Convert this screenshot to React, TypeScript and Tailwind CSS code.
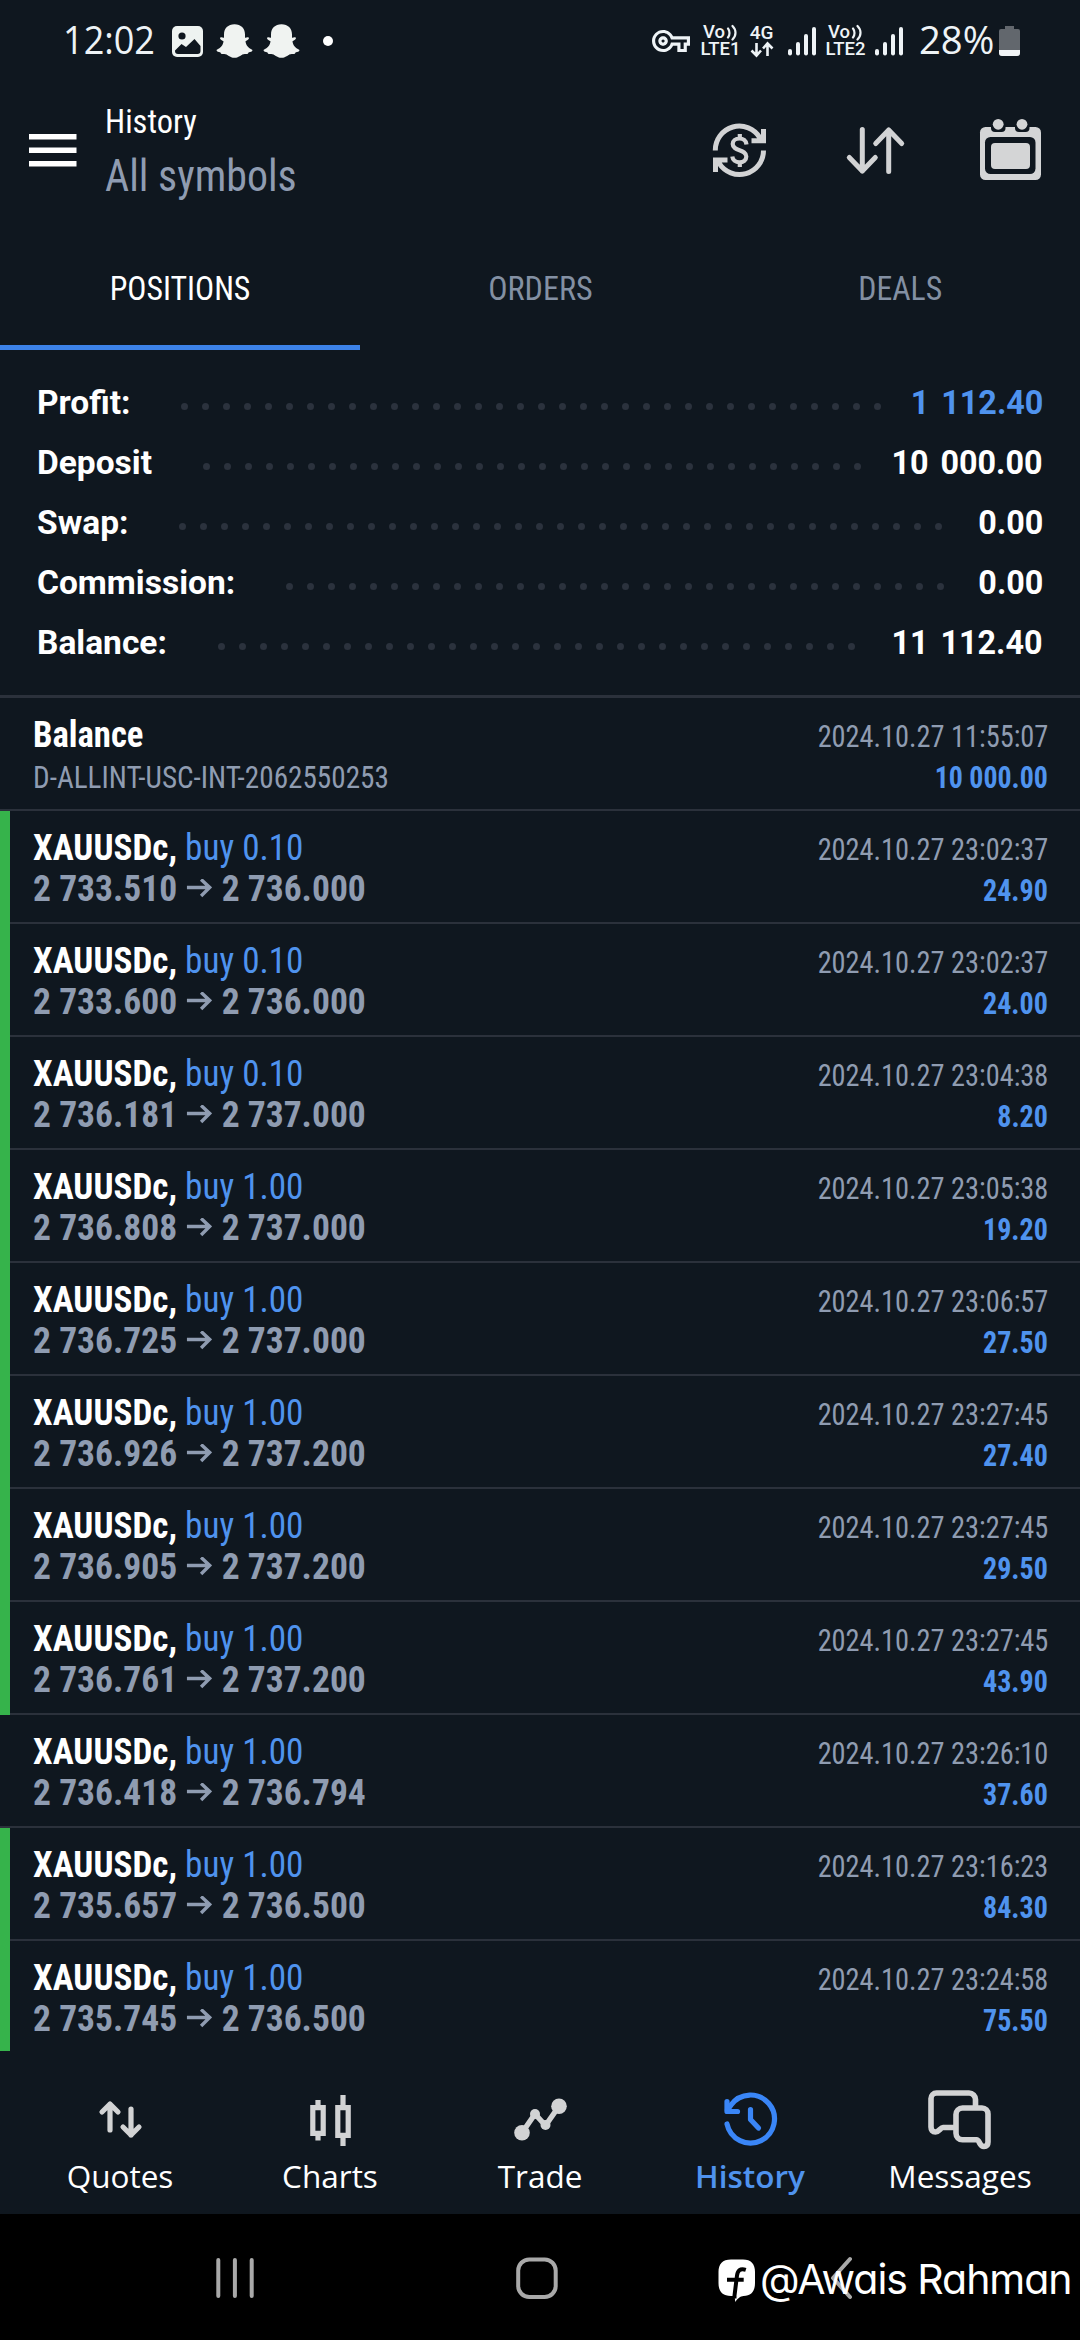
import { MdOutlineVpnKey } from 'react-icons/md';

const summary = [
  { label: 'Profit:', value: '1 112.40', dots: 34, blue: true },
  { label: 'Deposit', value: '10 000.00', dots: 32 },
  { label: 'Swap:', value: '0.00', dots: 37 },
  { label: 'Commission:', value: '0.00', dots: 32 },
  { label: 'Balance:', value: '11 112.40', dots: 31 },
];

const deals = [
  { volume: '0.10', from: '2 733.510', to: '2 736.000', time: '2024.10.27 23:02:37', profit: '24.90', tp: true },
  { volume: '0.10', from: '2 733.600', to: '2 736.000', time: '2024.10.27 23:02:37', profit: '24.00', tp: true },
  { volume: '0.10', from: '2 736.181', to: '2 737.000', time: '2024.10.27 23:04:38', profit: '8.20', tp: true },
  { volume: '1.00', from: '2 736.808', to: '2 737.000', time: '2024.10.27 23:05:38', profit: '19.20', tp: true },
  { volume: '1.00', from: '2 736.725', to: '2 737.000', time: '2024.10.27 23:06:57', profit: '27.50', tp: true },
  { volume: '1.00', from: '2 736.926', to: '2 737.200', time: '2024.10.27 23:27:45', profit: '27.40', tp: true },
  { volume: '1.00', from: '2 736.905', to: '2 737.200', time: '2024.10.27 23:27:45', profit: '29.50', tp: true },
  { volume: '1.00', from: '2 736.761', to: '2 737.200', time: '2024.10.27 23:27:45', profit: '43.90', tp: true },
  { volume: '1.00', from: '2 736.418', to: '2 736.794', time: '2024.10.27 23:26:10', profit: '37.60', tp: false },
  { volume: '1.00', from: '2 735.657', to: '2 736.500', time: '2024.10.27 23:16:23', profit: '84.30', tp: true },
  { volume: '1.00', from: '2 735.745', to: '2 736.500', time: '2024.10.27 23:24:58', profit: '75.50', tp: true },
];

function Signal() {
  return (
    <svg width="30" height="32" viewBox="0 0 30 32" fill="#eef3f6">
      <rect x="1" y="24" width="4" height="6.500" rx="2" />
      <rect x="9" y="17" width="4" height="13.500" rx="2" />
      <rect x="17" y="9" width="4" height="21.500" rx="2" />
      <rect x="25" y="2" width="4" height="28.500" rx="2" />
    </svg>
  );
}

function Ghost() {
  return (
    <svg className="ml-[10px]" width="37" height="34" viewBox="0 0 37 34" fill="#f0f3f1">
      <path d="M18.500 0.300 C25 0.300 29 4.500 29 10.500 V13.700 C30 14 31 12.800 32.300 13.300 C34 14.200 32 16.300 29.500 17.300 C30 21.500 32 23.800 36.500 26 C36.500 27.500 34.500 28 32.500 28.500 C32 30 31.500 30.200 29 30 C25.500 29.800 23.500 33.800 18.500 33.800 C13.500 33.800 11.500 29.800 8 30 C5.500 30.200 5 30 4.500 28.500 C2.500 28 0.500 27.500 0.500 26 C5 23.800 7 21.500 7.500 17.300 C5 16.300 3 14.200 4.700 13.300 C6 12.800 7 14 8 13.700 V10.500 C8 4.500 12 0.300 18.500 0.300 Z" />
    </svg>
  );
}

function VoLte({ sim }: { sim: string }) {
  return (
    <div className="flex w-[41px] flex-col items-center">
      <span className="flex items-center">
        Vo
        <svg className="ml-px" width="12" height="17" viewBox="0 0 12 17" fill="none" stroke="#eef3f6" strokeWidth="2.200" strokeLinecap="round">
          <path d="M2 4.500 C4 7 4 11 2 13.500 M6.500 2 C10.500 6 10.500 11.500 6.500 15.500" />
        </svg>
      </span>
      <span>{sim}</span>
    </div>
  );
}

function StatusBar() {
  return (
    <header className="flex h-[82px] items-center justify-between pr-[60px] pl-[63px] text-[#eef3f6]">
      <div className="flex items-center">
        <span className="w-[108px] origin-left scale-x-[0.925] pb-1 font-['Open_Sans'] text-[39px] leading-[80px] whitespace-nowrap">12:02</span>
        <svg className="mr-[2px]" width="33" height="33" viewBox="0 0 33 33">
          <rect x="1" y="1" width="31" height="31" rx="5" fill="#eef3f1" />
          <circle cx="11" cy="11" r="3.600" fill="#0f171f" />
          <path d="M4 25.500 L10.500 19 L15 22 L23.500 14 L29.500 21 V26 A3 3 0 0 1 26.500 29 H7 A3 3 0 0 1 4 26 Z" fill="#0f171f" />
        </svg>
        <Ghost />
        <Ghost />
        <span className="ml-[23px] size-[10px] rounded-full bg-white" />
      </div>
      <div className="flex items-center text-[18.500px] leading-[17px] font-medium">
        <MdOutlineVpnKey className="mr-[10px] size-[38px]" />
        <VoLte sim="LTE1" />
        <div className="mr-[13px] ml-[8px] flex w-[25px] flex-col items-center">
          <span className="text-[19px]">4G</span>
          <svg width="24" height="17" viewBox="0 0 24 17" fill="none" stroke="#eef3f6" strokeWidth="2.600">
            <path d="M6.500 2 V14 M1.500 9.500 L6.500 14.500 L11 9.500 M17.500 15 V3 M13 7.500 L17.500 2.500 L22.500 7.500" />
          </svg>
        </div>
        <Signal />
        <div className="mx-[8px]">
          <VoLte sim="LTE2" />
        </div>
        <Signal />
        <span className="ml-[15px] w-[80px] origin-left scale-x-[0.98] pb-1 font-['Open_Sans'] text-[39px] leading-[80px] font-normal whitespace-nowrap">28%</span>
        <svg width="21" height="32" viewBox="0 0 21 32">
          <path d="M6 1 H15 V4 H19 A2 2 0 0 1 21 6 V28 A3 3 0 0 1 18 31 H3 A3 3 0 0 1 0 28 V6 A2 2 0 0 1 2 4 H6 Z" fill="#62676d" />
          <path d="M0 25 H21 V28 A3 3 0 0 1 18 31 H3 A3 3 0 0 1 0 28 Z" fill="#f1f4f6" />
        </svg>
      </div>
    </header>
  );
}

function Toolbar() {
  return (
    <div className="flex h-[140px] pr-[37px] pl-[29px]">
      <svg className="mt-[51px]" width="48" height="34" viewBox="0 0 48 34" fill="#ffffff">
        <rect y="1" width="47.500" height="5.500" />
        <rect y="14.500" width="47.500" height="5.500" />
        <rect y="28" width="47.500" height="5.500" />
      </svg>
      <div className="mt-[17px] ml-[28px] flex flex-1 flex-col gap-[6px] [font-stretch:75%]">
        <h1 className="origin-left scale-x-[0.955] text-[34px] leading-[44px]">History</h1>
        <p className="origin-left scale-x-[0.932] text-[45px] leading-[54px] text-[#8f9cb1]">All symbols</p>
      </div>
      <div className="mt-[36px] flex gap-[72px]">
        <svg width="64" height="64" viewBox="707 118 64 64" fill="none" stroke="#d2d3d4" strokeWidth="5">
          <path d="M715.300 150.500 A24 24 0 0 1 760 138" />
          <path d="M763.500 150.500 A24 24 0 0 1 719 163" />
          <path d="M766 129 V143.300 H751.500 V138.200 H757 L761 134.500 V129 Z" fill="#d2d3d4" stroke="none" />
          <path d="M713 172 V157.500 H727.500 V162.600 H722 L718 166.500 V172 Z" fill="#d2d3d4" stroke="none" />
          <path d="M746.500 144.500 C746 140.500 743 138.500 739.500 138.500 C735.500 138.500 732.700 140.800 732.700 144 C732.700 151.500 746.300 149 746.300 156.500 C746.300 160.300 743.300 162.300 739.500 162.300 C735.500 162.300 732.700 160 732.300 156.500 M739.800 134 V139 M739.800 162 V167" strokeWidth="4.200" />
        </svg>
        <svg width="64" height="64" viewBox="843 118 64 64" fill="none" stroke="#d2d3d4" strokeWidth="5" strokeLinecap="round" strokeLinejoin="round">
          <path d="M862.300 129.500 V171 M849.300 157.500 L862.300 171 L875.300 157.500" />
          <path d="M888.700 171.500 V130 M875.700 143.500 L888.700 130 L901.700 143.500" />
        </svg>
        <svg width="64" height="64" viewBox="979 118 64 64">
          <rect x="980" y="127" width="61" height="53" rx="5.500" fill="#d4d5d6" />
          <rect x="991" y="120" width="14.500" height="12" rx="4" fill="#0f171f" />
          <rect x="1015" y="120" width="14.500" height="12" rx="4" fill="#0f171f" />
          <circle cx="998.200" cy="124.300" r="5.400" fill="#d4d5d6" />
          <circle cx="1022" cy="124.300" r="5.400" fill="#d4d5d6" />
          <rect x="985" y="137" width="50.500" height="37" rx="5.500" fill="#0f171f" />
          <rect x="991" y="143" width="39" height="26" rx="4" fill="#d4d5d6" />
        </svg>
      </div>
    </div>
  );
}

function Tabs() {
  return (
    <nav className="grid h-[128px] grid-cols-3 text-center text-[33.500px] leading-[113px] text-[#8390a3] [font-stretch:75%]">
      <div className="border-b-[5px] border-[#3c82e8] pt-[10px] text-white">
        <span className="inline-block scale-x-95">POSITIONS</span>
      </div>
      <div className="pt-[10px]">
        <span className="inline-block scale-x-[0.96]">ORDERS</span>
      </div>
      <div className="pt-[10px]">
        <span className="inline-block scale-x-95">DEALS</span>
      </div>
    </nav>
  );
}

function Summary() {
  return (
    <section className="h-[348px] border-b-[3px] border-[#2b313b] pt-[23px] pr-[37px] pl-[37px] text-[33.500px] leading-[60px] font-bold">
      {summary.map((s) => (
        <div key={s.label} className="flex items-center">
          <span>{s.label}</span>
          <div className="ml-[51px] flex gap-[14px] pt-[7px]">
            {Array.from({ length: s.dots }, (_, i) => (
              <span key={i} className="size-[7px] rounded-full bg-[#2b323d]" />
            ))}
          </div>
          <span
            className={
              s.blue
                ? 'ml-auto origin-right scale-x-[0.965] text-[#4f93ee] [word-spacing:4px]'
                : 'ml-auto origin-right scale-x-[0.965] [word-spacing:4px]'
            }
          >
            {s.value}
          </span>
        </div>
      ))}
    </section>
  );
}

function BalanceRow() {
  return (
    <div className="h-[113px] border-b-2 border-[#2b313b] pt-4 pr-[32px] pl-[33px] leading-[41px] [font-stretch:75%]">
      <div className="flex h-[41px] items-baseline justify-between">
        <span className="origin-left scale-x-[0.937] text-[37px] font-bold">Balance</span>
        <span className="origin-right scale-x-[0.9] text-[31.500px] text-[#8f9cb1]">2024.10.27 11:55:07</span>
      </div>
      <div className="flex h-[41px] items-baseline justify-between pt-[2px] text-[31.500px]">
        <span className="origin-left scale-x-[0.926] text-[#8f9cb1]">D-ALLINT-USC-INT-2062550253</span>
        <span className="origin-right scale-x-[0.885] font-bold text-[#4f93ee]">10 000.00</span>
      </div>
    </div>
  );
}

function DealRow({ deal }: { deal: (typeof deals)[number] }) {
  return (
    <li className="flex h-[113px] leading-[41px] [font-stretch:75%] last:h-[110px] [&:last-child>div]:border-b-0">
      <div className={deal.tp ? 'w-[10px] bg-[#36b34b]' : 'w-[10px] border-b-2 border-[#2b313b]'} />
      <div className="flex-1 border-b-2 border-[#2b313b] pt-4 pr-[32px] pl-[23px]">
        <div className="flex h-[41px] items-baseline justify-between">
          <span className="origin-left scale-x-[0.937] text-[37.500px]">
            <b>XAUUSDc,</b> <span className="text-[#4f93ee]">buy {deal.volume}</span>
          </span>
          <span className="origin-right scale-x-[0.9] text-[31.500px] text-[#8f9cb1]">{deal.time}</span>
        </div>
        <div className="flex h-[41px] items-baseline justify-between font-bold">
          <span className="flex origin-left scale-x-[0.947] items-center text-[37.500px] text-[#8f9cb1]">
            {deal.from}
            <svg className="mx-[10px]" width="27" height="20" viewBox="0 0 27 20" fill="none" stroke="#8f9cb1" strokeWidth="3.600">
              <path d="M0.500 8.500 H24 M15.500 0.500 L24.500 8.500 L15.500 17" />
            </svg>
            {deal.to}
          </span>
          <span className="origin-right scale-x-[0.89] text-[31.500px] text-[#4f93ee]">{deal.profit}</span>
        </div>
      </div>
    </li>
  );
}

function BottomNav() {
  const item = 'flex flex-col items-center gap-[3px]';
  return (
    <nav className="grid h-[163px] grid-cols-5 px-[15px] pt-[36px] font-['Open_Sans'] text-[31.500px] leading-[44px]">
      <div className={item}>
        <svg width="64" height="64" viewBox="88 2087 64 64" fill="none" stroke="#d2d3d4" strokeWidth="5.200" strokeLinecap="round" strokeLinejoin="round">
          <path d="M110 2130 V2104 M102 2112 L110 2104 L118 2112 M131 2109 V2135 M123 2127 L131 2135 L139 2127" />
        </svg>
        Quotes
      </div>
      <div className={item}>
        <svg width="64" height="64" viewBox="298 2087 64 64" fill="none" stroke="#d2d3d4" strokeWidth="5.200">
          <path d="M312.800 2107.600 H323.200 V2133.400 H312.800 Z M318 2100 V2106 M318 2135 V2140.500 M337.800 2107.600 H348.200 V2135.400 H337.800 Z M343 2095 V2106 M343 2136 V2146" />
        </svg>
        Charts
      </div>
      <div className={item}>
        <svg width="64" height="64" viewBox="508 2087 64 64" fill="#d2d3d4" stroke="#d2d3d4">
          <path d="M522 2132.700 L535 2114 L545.500 2125.500 L559 2106.300" fill="none" strokeWidth="5.400" />
          <g stroke="none">
            <circle cx="522" cy="2132.700" r="7.800" />
            <circle cx="535" cy="2114" r="5" />
            <circle cx="545.500" cy="2125" r="5" />
            <circle cx="559" cy="2106.300" r="7.800" />
          </g>
        </svg>
        Trade
      </div>
      <div className="flex flex-col items-center gap-[3px] font-[550] text-[#4f93ee]">
        <svg width="64" height="64" viewBox="718 2087 64 64" fill="none" stroke="#3a86f7" strokeWidth="5.200" strokeLinecap="round" strokeLinejoin="round">
          <path d="M727 2124 A24 24 0 1 0 731 2105 L727.500 2110" />
          <path d="M727 2101.500 V2111.500 H737.500" />
          <path d="M750.500 2109.500 V2119.500 L758.500 2128" />
        </svg>
        History
      </div>
      <div className={item}>
        <svg width="64" height="64" viewBox="928 2087 64 64" fill="none" stroke="#d2d3d4" strokeWidth="5.600" strokeLinejoin="round">
          <path d="M955 2127.500 H943 C940.500 2127.500 939 2132 935.500 2132 C932.500 2132 931 2130 931 2127 V2098.500 A5.500 5.500 0 0 1 936.500 2093 H969 A6.500 6.500 0 0 1 975.500 2099.500 V2108" />
          <path d="M962.500 2108 H982 A6 6 0 0 1 988 2114 V2142 C988 2145 986.500 2146.500 984 2146.500 C979 2146.500 980 2139.800 976.500 2139.800 H962.500 A6.500 6.500 0 0 1 956 2133.300 V2114.500 A6.500 6.500 0 0 1 962.500 2108 Z" />
        </svg>
        Messages
      </div>
    </nav>
  );
}

function SystemBar() {
  return (
    <footer className="relative flex h-[126px] bg-black pt-[41px] pl-[216px]">
      <svg width="40" height="46" viewBox="216 2255 40 46" stroke="#a9a9a9" strokeWidth="4" strokeLinecap="round">
        <path d="M218.300 2260 V2296 M234.900 2260 V2296 M251.700 2260 V2296" />
      </svg>
      <svg className="ml-[258px]" width="45" height="46" viewBox="514 2255 45 46" fill="none" stroke="#a9a9a9" strokeWidth="4">
        <rect x="518.200" y="2259.500" width="37.500" height="37.500" rx="11" />
      </svg>
      <svg className="ml-[270px]" width="26" height="46" viewBox="829 2255 26 46" fill="none" stroke="#a9a9a9" strokeWidth="4" strokeLinecap="round" strokeLinejoin="round">
        <path d="M850 2259 L833 2278 L850 2297" />
      </svg>
      <div className="absolute top-[36px] left-[716px] flex items-center">
        <svg width="42" height="47" viewBox="716 2257.500 42 47">
          <path d="M731 2261 H743 C751 2261 755 2265.500 755 2273.500 V2284.500 C755 2293 751 2297.500 743.500 2297.500 C740.500 2297.500 737 2300.500 735.300 2303.500 L734.500 2297.500 H731 C722.500 2297.500 718.500 2293 718.500 2284.500 V2273.500 C718.500 2265.500 722.500 2261 731 2261 Z" fill="#ffffff" />
          <path d="M745.800 2271.300 C740 2269.500 737.700 2272 737 2277 L734.500 2297 V2300 M727 2281.300 H743.700" fill="none" stroke="#000000" strokeWidth="4" />
        </svg>
        <span className="ml-[2px] font-['Inter'] text-[41px] leading-[58px] tracking-[-1.050px] whitespace-nowrap [font-feature-settings:'cv11']">@Awais Rahman</span>
      </div>
    </footer>
  );
}

export default function App() {
  return (
    <div className="h-[2340px] w-[1080px] overflow-hidden bg-[#0f171f] font-['Roboto',sans-serif] text-white">
      <StatusBar />
      <Toolbar />
      <Tabs />
      <Summary />
      <BalanceRow />
      <ul>
        {deals.map((d, i) => (
          <DealRow key={i} deal={d} />
        ))}
      </ul>
      <BottomNav />
      <SystemBar />
    </div>
  );
}
